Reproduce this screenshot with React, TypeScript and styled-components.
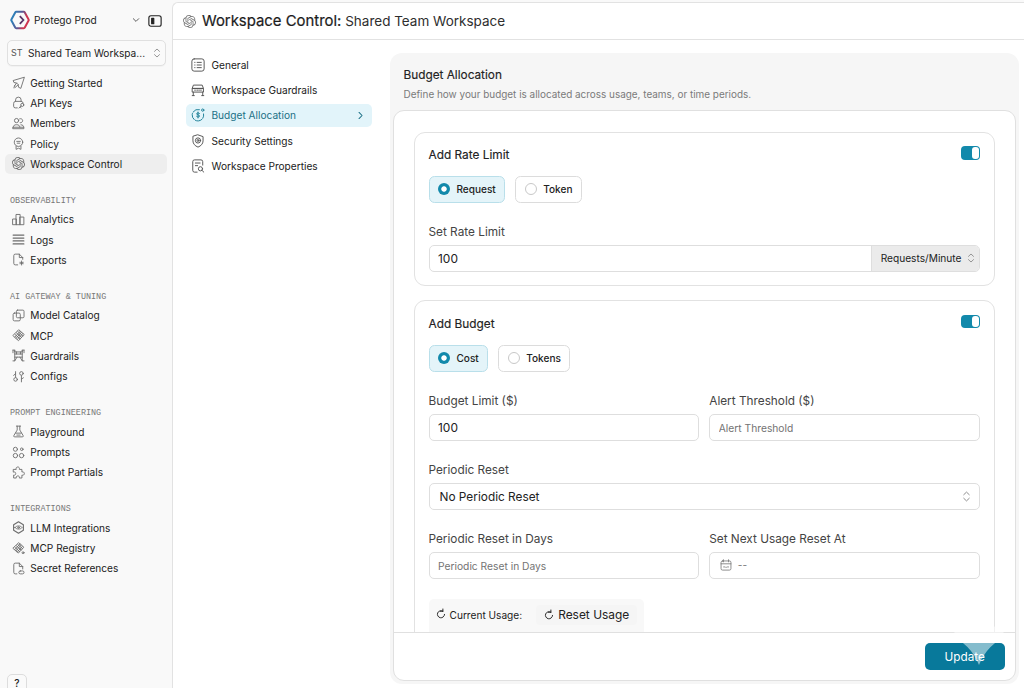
import React from 'react';
import styled, { createGlobalStyle, css } from 'styled-components';
import { SiOpenai } from 'react-icons/si';

const Global = createGlobalStyle`
  *, *::before, *::after { box-sizing: border-box; }
  html, body { margin: 0; height: 100%; }
  body { background: #f9f9f9; overflow: hidden; }
  #root { height: 688px; }
  body, input, button {
    font-family: Inter, "Liberation Sans", sans-serif;
    font-size: 10.14px;
    line-height: 14px;
    color: #222;
  }
`;

const teal = '#1289ab';

/* ---------- icons ---------- */

const Glyph = styled.svg<{ $size?: number }>`
  width: ${p => p.$size ?? 13}px;
  height: ${p => p.$size ?? 13}px;
  flex: none;
  fill: none;
  stroke: currentColor;
  stroke-width: 1.1;
  stroke-linecap: round;
  stroke-linejoin: round;
  overflow: visible;
`;

const shapes: Record<string, React.ReactNode> = {
  send: <path d="M14.8 1.6 1.4 5.6l1 2.4 3.2.6 2 2 .4 3.2 2.4 1.2zM5.6 8.6 3.2 12M7.6 10.8l-3.8 3.4M3.2 12l-.8 2.6" />,
  key: (
    <>
      <path d="M4.4 6.6V4.8a3.4 3.4 0 0 1 6.8 0v1.8" />
      <path d="M6.5 14.6H4a2 2 0 0 1-2-2V9.2a2.6 2.6 0 0 1 2.6-2.6h6.6a2.6 2.6 0 0 1 2.6 2.4" />
      <circle cx="12.6" cy="11" r="1.9" />
      <path d="m11.2 12.4-2.6 2.4M10 13.4l1.2 1.2" />
    </>
  ),
  members: (
    <>
      <circle cx="5.6" cy="4.4" r="2.6" />
      <path d="M9.4 2.2a2.6 2.6 0 1 1 .6 4.9M1.6 12.4c0-2 1.4-2.9 4-2.9s4 .9 4 2.9M11 9.6c2.2.1 3.4 1 3.4 2.8M1.4 12.6h13.2v1.8H1.4z" />
    </>
  ),
  policy: (
    <>
      <circle cx="8" cy="6.4" r="5.2" />
      <path d="M5.8 5.4h4.4M6.4 7.6h3.2M5 11.2v4l3-1.4 3 1.4v-4" />
    </>
  ),
  analytics: <path d="M1.2 7.4h4.2v7H1.2zM5.4 1.8h4.6v12.6H5.4zM10 5h4.6v9.4H10z" />,
  logs: <path d="M1.4 2.6h13.2M1.4 6.2h13.2M1.4 9.8h13.2M1.4 13.4h13.2" strokeWidth="1.5" />,
  exports: <path d="M7 14.6H4a1.8 1.8 0 0 1-1.8-1.8V3.2A1.8 1.8 0 0 1 4 1.4h5l4.2 4.2v2.2M9 1.4v4.2h4.2M11.8 9.8v5M9.400 12.300h4.800M10.600 11.100l2.400 2.400M13 11.100l-2.400 2.400" />,
  catalog: (
    <>
      <rect x="5.4" y="1.4" width="9.4" height="9.4" rx="1.4" />
      <path d="M3 5h5.6A1.6 1.6 0 0 1 10.2 6.6V13a1.6 1.6 0 0 1-1.6 1.6H3A1.6 1.6 0 0 1 1.4 13V6.6A1.6 1.6 0 0 1 3 5z" />
    </>
  ),
  mcp: (
    <path d="m8.6 1.2 6.4 5.6-7 7.6-6.6-6zM7 2.9l6.4 5.8M5.4 4.7l6.4 5.6M3.6 6.6 9.8 12M5 11.4l6.6-7.4M6.6 12.8l6.6-7.2M3.4 10l6.8-7.2" />
  ),
  registry: (
    <>
      <path d="m8.6 1.2 6 5.2-6.8 7.2-6.4-5.6zM7 2.9l6 5.4M5.4 4.7l5.8 5.2M3.6 6.6l5.8 5.2M5 10.8l6.2-7M3.4 9.4l6.4-7M6.6 12.2l6-6.6" />
      <circle cx="13.6" cy="13.2" r="1.2" />
    </>
  ),
  guardrails: (
    <path d="M1.2 1.4h2.2v2.2h9.2V1.4h2.2M3.4 1.4v13.2H1.2M12.6 1.4v13.2h2.2M1.2 1.4v3.2M14.8 1.4v3.2M3.4 6.2h9.2M3.4 10h9.2M3.4 14.6 6.2 10M12.6 14.6 9.8 10M5.6 3.6v2.6M10.4 3.6v2.6" />
  ),
  configs: (
    <>
      <path d="M4.4 2v7M11.6 7v7.6M2 6.6l2.4-2M14 9.6l-2.4 1.6" />
      <circle cx="4.4" cy="11.6" r="2.2" />
      <circle cx="11.6" cy="4.2" r="2.2" />
    </>
  ),
  flask: <path d="M5.4 1.4h5.2M6.4 1.4v4.8l-4 6.6a1.2 1.2 0 0 0 1 1.8h9.2a1.2 1.2 0 0 0 1-1.8l-4-6.6V1.4M4.6 10h6.8M6 12.4h4" />,
  prompts: (
    <>
      <circle cx="4.2" cy="4" r="2.5" />
      <circle cx="12" cy="4" r="1.6" />
      <circle cx="4.2" cy="11.8" r="2.7" />
      <circle cx="11.8" cy="11.8" r="2.7" />
    </>
  ),
  puzzle: (
    <path d="M2 4.2h3.2c-.6-1.7.4-3 1.9-3s2.5 1.3 1.9 3h3.2v3.2c1.7-.6 3 .4 3 1.9s-1.3 2.5-3 1.9v3.6H9c.5-1.5-.3-2.6-1.8-2.6s-2.4 1.1-1.9 2.6H2v-3.600c1.500.5 2.600-.4 2.600-1.900S3.500 6.900 2 7.400z" />
  ),
  llm: (
    <>
      <path d="m8 1 6 3.5v7L8 15l-6-3.5v-7z" strokeWidth="1.4" />
      <path d="M3.6 8C5.400 5.400 10.600 5.400 12.400 8 10.600 10.600 5.400 10.600 3.600 8z" />
      <circle cx="8" cy="8" r="1" />
    </>
  ),
  secret: (
    <>
      <path d="M6 14.6H4a1.8 1.8 0 0 1-1.8-1.8V3.2A1.8 1.8 0 0 1 4 1.4h5l4.2 4.2v3M9 1.4v4.2h4.2" />
      <rect x="8.4" y="11" width="6.4" height="3.6" rx="1.8" />
    </>
  ),
  general: (
    <>
      <rect x="1" y="1" width="14" height="14" rx="2.6" />
      <path d="M4.2 5h.4M7 5h4.8M4.2 8h.4M7 8h4.8M4.2 11h.4M7 11h4.8" />
    </>
  ),
  barrier: (
    <path d="M3.2 2.4h9.6l1.4 3.8H1.8zM1.8 6.2h12.4v4.2H1.8zM2.6 10.4v4M13.4 10.4v4M1.4 14.4h2.4M12.2 14.4h2.4M4.6 7.8v1M7 7.8v1M9.2 7.8v1M11.4 7.8v1" />
  ),
  budget: (
    <>
      <path d="M9.6 1.8a6.6 6.6 0 1 0 4.8 5" strokeDasharray="8 1.6" />
      <circle cx="13.4" cy="2.4" r="1.3" />
      <path d="M9.8 6.200c-.6-.9-3.400-1-3.400.5 0 1.600 3.400.8 3.400 2.500 0 1.500-2.900 1.400-3.500.4M8 4.600v6.800" />
    </>
  ),
  shield: (
    <>
      <path d="m8 1 5.8 2v4.8c0 3.4-2.4 5.8-5.8 7.2-3.4-1.4-5.8-3.8-5.8-7.2V3z" />
      <circle cx="8" cy="7.4" r="3" />
      <circle cx="8" cy="7.4" r="1.1" />
    </>
  ),
  properties: (
    <>
      <path d="M7 15H4a2 2 0 0 1-2-2V3a2 2 0 0 1 2-2h7.4a2 2 0 0 1 2 2v4M5 4.6h5.4M5 7.6h2.6" />
      <circle cx="10.8" cy="11.2" r="2.4" />
      <path d="m12.6 13 2 2" />
    </>
  ),
  updown: <path d="m4 5.4 4-3.8 4 3.8M4 10.6l4 3.8 4-3.8" strokeWidth="1.4" />,
  down: <path d="m2.6 5.4 5.4 5.4 5.4-5.4" strokeWidth="1.9" />,
  right: <path d="m5.4 2.6 5.4 5.4-5.4 5.4" />,
  reset: <path d="M10.8 3.4A5.7 5.7 0 1 0 13.7 8.6M11 3.5H7M11 3.5V0" strokeWidth="1.5" />,
  calendar: (
    <>
      <rect x="1.4" y="2.6" width="13.2" height="12.2" rx="2" />
      <path d="M1.4 6.4h13.2M4.6 1v2.8M11.4 1v2.8M4.8 10.6h1.4M7.6 11h1M10 10.6h1.4" />
    </>
  ),
  panel: (
    <>
      <rect x="1" y="2" width="14" height="12" rx="2.4" />
      <path d="M4.2 5h2.4v6H4.2z" fill="currentColor" />
    </>
  ),
};

const Icon = ({ name, size, className }: { name: string; size?: number; className?: string }) => (
  <Glyph viewBox="0 0 16 16" $size={size} className={className} aria-hidden>
    {shapes[name]}
  </Glyph>
);

const Knot = styled(SiOpenai)<{ $size: number }>`
  width: ${p => p.$size}px;
  height: ${p => p.$size}px;
  flex: none;
`;

/* ---------- frame ---------- */

const Frame = styled.div`
  display: flex;
  width: 1024px;
  height: 688px;
  background: #f9f9f9;
  overflow: hidden;
`;

const Sidebar = styled.aside`
  display: flex;
  flex-direction: column;
  width: 172px;
  flex: none;
  padding: 8px 5px 0;
`;

const Org = styled.div`
  display: flex;
  align-items: center;
  height: 24.5px;
  padding: 0 5px;
`;

const OrgLogo = styled.svg`
  width: 20px;
  height: 20px;
  flex: none;
`;

const OrgName = styled.span`
  flex: 1;
  margin-left: 4px;
`;

const OrgChevron = styled(Icon)`
  color: #555;
  margin-right: 8px;
`;

const PanelToggle = styled(Icon)`
  color: #222;
  stroke-width: 1.3;
  margin-top: 1px;
`;

const WorkspacePicker = styled.button`
  display: flex;
  align-items: center;
  height: 26px;
  margin: 7.5px 1px 6.6px 2px;
  padding: 0 3px;
  background: #fafafa;
  border: 1px solid #e0e0e0;
  border-radius: 5px;
  box-shadow: 0 1px 1px rgba(0, 0, 0, 0.03);
  text-align: left;
  white-space: nowrap;
`;

const Initials = styled.span`
  width: 17px;
  font-size: 9px;
  color: #555;
`;

const PickerName = styled.span`
  flex: 1;
`;

const Faint = styled(Icon)`
  color: #888;
`;

const NavLabel = styled.div`
  height: 35.3px;
  padding: 19.9px 0 0 5px;
  font: 8.45px/14px "Liberation Mono", monospace;
  color: #777;
  white-space: pre;
`;

const NavItem = styled.a<{ $active?: boolean }>`
  display: flex;
  align-items: center;
  gap: 5.3px;
  height: 20.27px;
  padding-left: 7px;
  border-radius: 5px;
  color: #222;
  background: ${p => (p.$active ? '#eeeeee' : 'transparent')};
  & > svg { color: #6c6c6c; }
`;

const Help = styled.button`
  width: 20px;
  height: 20px;
  flex: none;
  margin: auto 0 -6px 2px;
  padding: 0 0 2px;
  background: #fafafa;
  border: 1px solid #ddd;
  border-radius: 5px;
  font-size: 10px;
  line-height: 11px;
  font-weight: 500;
`;

const Main = styled.main`
  display: flex;
  flex-direction: column;
  flex: 1;
  min-width: 0;
  margin-top: 2px;
  background: #fff;
  border: 1px solid #e2e2e2;
  border-width: 1px 0 0 1px;
  border-radius: 6px 0 0 0;
`;

const TitleBar = styled.header`
  display: flex;
  align-items: center;
  height: 37px;
  padding: 0 9px 0 10px;
  border-bottom: 1px solid #e2e2e2;
  & > svg { color: #777; }
`;

const Title = styled.h1`
  margin: 0 0 0 6px;
  font-size: 14.9px;
  font-weight: 400;
  color: #1c1c1c;
  -webkit-text-stroke: 0.2px #1c1c1c;
`;

const TitleDetail = styled.span`
  margin-left: 3.8px;
  font-size: 13.5px;
  color: #2e2e2e;
`;

const Body = styled.div`
  display: flex;
  flex: 1;
  min-height: 0;
  padding: 13px 5px 4px 13px;
`;

const SubNav = styled.nav`
  display: flex;
  flex-direction: column;
  gap: 2.35px;
  width: 186px;
  margin-right: 18px;
  flex: none;
`;

const SubItem = styled.a<{ $active?: boolean }>`
  display: flex;
  align-items: center;
  height: 23px;
  padding: 0 7px 0 5px;
  gap: 6.5px;
  border-radius: 5px;
  color: #222;
  & > svg:first-child { color: #555; }
  ${p => p.$active && css`
    background: #e2f4fa;
    color: #1b7186;
    & > svg:first-child { color: #1b7f97; }
  `}
`;

const SubLabel = styled.span`
  flex: 1;
`;

const Chevron = styled(Icon)`
  stroke-width: 1.8;
`;

/* ---------- settings panel ---------- */

const Shell = styled.section`
  display: flex;
  flex-direction: column;
  flex: 1;
  min-width: 0;
  padding: 0 3px 3px;
  background: #f6f6f6;
  border-radius: 12px;
`;

const ShellHead = styled.div`
  height: 57px;
  padding: 14px 10px 0 10.5px;
`;

const ShellTitle = styled.h2`
  margin: 0;
  font-size: 11.8px;
  font-weight: 400;
  line-height: 16px;
  -webkit-text-stroke: 0.15px #222;
`;

const ShellText = styled.p`
  margin: 3.5px 0 0;
  font-size: 9.93px;
  color: #7a7a7a;
`;

const Sheet = styled.div`
  display: flex;
  flex-direction: column;
  flex: 1;
  min-height: 0;
  background: #fff;
  border: 1px solid #e0e0e0;
  border-radius: 11px;
  overflow: hidden;
`;

const Scroll = styled.div`
  flex: 1;
  min-height: 0;
  overflow: hidden;
  padding: 20.5px 20.5px 0 20px;
`;

const Card = styled.div`
  margin-bottom: 14px;
  padding: 13.5px;
  border: 1px solid #e2e2e2;
  border-radius: 11px;
`;

const CardHead = styled.div`
  display: flex;
  justify-content: space-between;
  height: 29.8px;
`;

const CardTitle = styled.h3`
  margin: 0;
  font-size: 11.85px;
  font-weight: 400;
  line-height: 19px;
  -webkit-text-stroke: 0.15px #222;
`;

const Switch = styled.button`
  display: flex;
  justify-content: flex-end;
  width: 19.5px;
  height: 13.5px;
  padding: 1px 1.5px;
  background: ${teal};
  border: 0;
  border-radius: 4px;
  &::after {
    content: '';
    width: 6.5px;
    height: 11.5px;
    border-radius: 3px;
    background: #fff;
  }
`;

const Choices = styled.div`
  display: flex;
  gap: 10px;
  margin-bottom: 20px;
`;

const Choice = styled.button<{ $on?: boolean }>`
  display: flex;
  align-items: center;
  gap: 6.5px;
  height: 27px;
  padding: 0 8.5px;
  font-size: 10.05px;
  font-weight: 500;
  border-radius: 5.5px;
  border: 1px solid ${p => (p.$on ? '#b9dfea' : '#dcdcdc')};
  background: ${p => (p.$on ? '#e4f4f9' : '#fff')};
  &::before {
    content: '';
    width: 12px;
    height: 12px;
    border-radius: 50%;
    ${p => (p.$on
      ? css`background: radial-gradient(circle, #fff 2.3px, ${teal} 3.1px);`
      : css`background: #fff; border: 1px solid #c8c8c8;`)}
  }
`;

const Grid = styled.div`
  display: grid;
  grid-template-columns: 1fr 1fr;
  gap: 20px 10px;
`;

const Field = styled.label<{ $wide?: boolean }>`
  display: block;
  ${p => p.$wide && css`grid-column: 1 / -1;`}
`;

const FieldName = styled.span`
  display: block;
  height: 22.1px;
  font-size: 11.8px;
  line-height: 19px;
  color: #444;
`;

const Box = styled.div`
  display: flex;
  align-items: center;
  height: 27px;
  border: 1px solid #dedede;
  border-radius: 5px;
  overflow: hidden;
  background: #fff;
`;

const Input = styled.input`
  flex: 1;
  min-width: 0;
  height: 100%;
  border: 0;
  outline: 0;
  padding: 0 8.5px;
  background: none;
  font-size: 11.95px;
  &::placeholder { font-size: 10.25px; color: #737373; opacity: 1; }
`;

const Unit = styled.div`
  display: flex;
  align-items: center;
  gap: 4.5px;
  align-self: stretch;
  padding: 0 3px 0 8.5px;
  border-left: 1px solid #dedede;
  background: #ebebeb;
  font-size: 10.17px;
`;

const SelectValue = styled.span`
  flex: 1;
  padding: 1px 0 0 10px;
  font-size: 11.85px;
  color: #222;
`;

const SelectArrow = styled(Faint)`
  margin-right: 7px;
`;

const DateValue = styled.div`
  display: flex;
  align-items: center;
  gap: 6px;
  padding-left: 9.5px;
  color: #777;
`;

const Usage = styled.div`
  display: inline-flex;
  align-items: center;
  gap: 14px;
  height: 44px;
  margin-top: 20px;
  padding: 0 7.5px 11px 7px;
  border-radius: 5px;
  background: #f8f8f8;
`;

const UsageLabel = styled.span`
  display: flex;
  align-items: center;
  gap: 4px;
  & > svg { margin-top: -2px; }
`;

const ResetButton = styled.button`
  display: flex;
  align-items: center;
  gap: 4.5px;
  height: 20px;
  padding: 0 7.5px;
  border: 0;
  border-radius: 4px;
  background: #f5f5f5;
  font-size: 11.95px;
`;

const Foot = styled.footer`
  display: flex;
  justify-content: flex-end;
  height: 48.5px;
  flex: none;
  padding: 10px;
  border-top: 1px solid #e0e0e0;
`;

const Update = styled.button`
  position: relative;
  width: 80.5px;
  height: 27.5px;
  padding: 1px 0 0;
  border: 0;
  border-radius: 5px;
  background: #08799b;
  color: #fff;
  font-size: 11.75px;
`;

const Sparkle = styled.svg`
  position: absolute;
  left: 24.5px;
  top: -38px;
  width: 60px;
  height: 60px;
  fill: rgba(255, 255, 255, 0.5);
`;

const Logo = () => (
  <OrgLogo viewBox="0 0 20 20" fill="none" strokeWidth="2">
    <defs>
      <linearGradient id="org" x1="0" x2="1" y1="0.3" y2="0.6">
        <stop offset="0.1" stopColor="#2f7fb8" />
        <stop offset="0.5" stopColor="#5b5793" />
        <stop offset="0.8" stopColor="#cf3550" />
      </linearGradient>
    </defs>
    <path d="M6.2 1.8h7.6a1.2 1.2 0 0 1 1 .6l3.8 7a1.2 1.2 0 0 1 0 1.2l-3.8 7a1.2 1.2 0 0 1-1 .6H6.2a1.2 1.2 0 0 1-1-.6l-3.8-7a1.2 1.2 0 0 1 0-1.2l3.8-7a1.2 1.2 0 0 1 1-.6z" stroke="url(#org)" />
    <path d="m9.8 6.2 3.6 3.8-3.6 3.8" stroke="#5a3567" strokeWidth="1.8" />
  </OrgLogo>
);

const nav: { label?: string; items: [string, string][] }[] = [
  { items: [['send', 'Getting Started'], ['key', 'API Keys'], ['members', 'Members'], ['policy', 'Policy'], ['knot', 'Workspace Control']] },
  { label: 'OBSERVABILITY', items: [['analytics', 'Analytics'], ['logs', 'Logs'], ['exports', 'Exports']] },
  { label: 'AI GATEWAY & TUNING', items: [['catalog', 'Model Catalog'], ['mcp', 'MCP'], ['guardrails', 'Guardrails'], ['configs', 'Configs']] },
  { label: 'PROMPT ENGINEERING', items: [['flask', 'Playground'], ['prompts', 'Prompts'], ['puzzle', 'Prompt Partials']] },
  { label: 'INTEGRATIONS', items: [['llm', 'LLM Integrations'], ['registry', 'MCP Registry'], ['secret', 'Secret References']] },
];

const sections: [string, string][] = [
  ['general', 'General'],
  ['barrier', 'Workspace Guardrails'],
  ['budget', 'Budget Allocation'],
  ['shield', 'Security Settings'],
  ['properties', 'Workspace Properties'],
];

export default function App() {
  return (
    <Frame>
      <Global />
      <Sidebar>
        <Org>
          <Logo />
          <OrgName>Protego Prod</OrgName>
          <OrgChevron name="down" size={8} />
          <PanelToggle name="panel" size={14} />
        </Org>
        <WorkspacePicker>
          <Initials>ST</Initials>
          <PickerName>Shared Team Workspa...</PickerName>
          <Faint name="updown" size={10} />
        </WorkspacePicker>
        {nav.map((group, i) => (
          <React.Fragment key={i}>
            {group.label && <NavLabel>{group.label}</NavLabel>}
            {group.items.map(([icon, text]) => (
              <NavItem key={text} $active={icon === 'knot'}>
                {icon === 'knot' ? <Knot $size={13} /> : <Icon name={icon} />}
                {text}
              </NavItem>
            ))}
          </React.Fragment>
        ))}
        <Help>?</Help>
      </Sidebar>
      <Main>
        <TitleBar>
          <Knot $size={13} />
          <Title>Workspace Control:</Title>
          <TitleDetail>Shared Team Workspace</TitleDetail>
        </TitleBar>
        <Body>
          <SubNav>
            {sections.map(([icon, text]) => (
              <SubItem key={text} $active={icon === 'budget'}>
                <Icon name={icon} size={14} />
                <SubLabel>{text}</SubLabel>
                {icon === 'budget' && <Chevron name="right" size={9} />}
              </SubItem>
            ))}
          </SubNav>
          <Shell>
            <ShellHead>
              <ShellTitle>Budget Allocation</ShellTitle>
              <ShellText>Define how your budget is allocated across usage, teams, or time periods.</ShellText>
            </ShellHead>
            <Sheet>
              <Scroll>
                <Card>
                  <CardHead>
                    <CardTitle>Add Rate Limit</CardTitle>
                    <Switch aria-label="Rate limit" />
                  </CardHead>
                  <Choices>
                    <Choice $on>Request</Choice>
                    <Choice>Token</Choice>
                  </Choices>
                  <Field>
                    <FieldName>Set Rate Limit</FieldName>
                    <Box>
                      <Input defaultValue="100" />
                      <Unit>
                        Requests/Minute
                        <Faint name="updown" size={10} />
                      </Unit>
                    </Box>
                  </Field>
                </Card>
                <Card>
                  <CardHead>
                    <CardTitle>Add Budget</CardTitle>
                    <Switch aria-label="Budget" />
                  </CardHead>
                  <Choices>
                    <Choice $on>Cost</Choice>
                    <Choice>Tokens</Choice>
                  </Choices>
                  <Grid>
                    <Field>
                      <FieldName>Budget Limit ($)</FieldName>
                      <Box><Input defaultValue="100" /></Box>
                    </Field>
                    <Field>
                      <FieldName>Alert Threshold ($)</FieldName>
                      <Box><Input placeholder="Alert Threshold" /></Box>
                    </Field>
                    <Field $wide>
                      <FieldName>Periodic Reset</FieldName>
                      <Box>
                        <SelectValue>No Periodic Reset</SelectValue>
                        <SelectArrow name="updown" size={11} />
                      </Box>
                    </Field>
                    <Field>
                      <FieldName>Periodic Reset in Days</FieldName>
                      <Box><Input placeholder="Periodic Reset in Days" /></Box>
                    </Field>
                    <Field>
                      <FieldName>Set Next Usage Reset At</FieldName>
                      <Box>
                        <DateValue>
                          <Icon name="calendar" size={12} />
                          --
                        </DateValue>
                      </Box>
                    </Field>
                  </Grid>
                  <Usage>
                    <UsageLabel>
                      <Icon name="reset" size={10} />
                      Current Usage:
                    </UsageLabel>
                    <ResetButton>
                      <Icon name="reset" size={10} />
                      Reset Usage
                    </ResetButton>
                  </Usage>
                </Card>
              </Scroll>
              <Foot>
                <Update>
                  Update
                  <Sparkle viewBox="-28 -28 56 56" aria-hidden>
                    <path d="M0-28Q8-8 28 0 8 8 0 28-8 8-28 0-8-8 0-28z" />
                  </Sparkle>
                </Update>
              </Foot>
            </Sheet>
          </Shell>
        </Body>
      </Main>
    </Frame>
  );
}
